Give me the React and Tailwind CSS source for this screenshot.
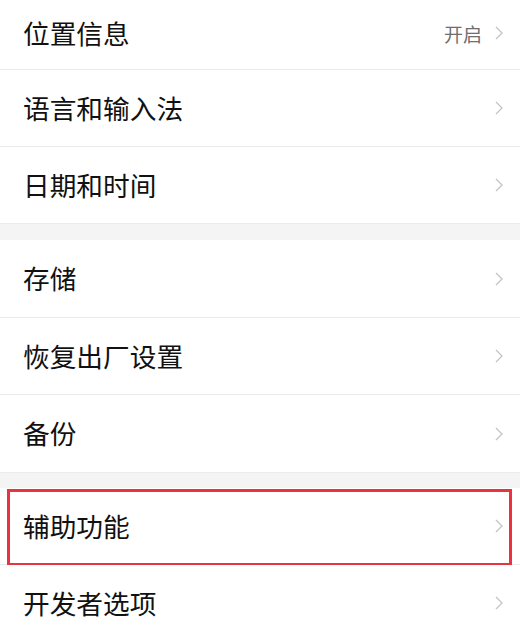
import React from 'react';

const font = { fontFamily: '"Noto Sans CJK SC", "Noto Sans", sans-serif' };

function Chevron() {
  return (
    <svg width="8" height="14" viewBox="0 0 8 14" className="flex-shrink-0">
      <polyline points="1,1 7,7 1,13" fill="none" stroke="#c4c4c4" strokeWidth="1.3" />
    </svg>
  );
}

function Row({ label, value, h = 'h-[77px]', highlight = false, last = false }) {
  return (
    <div className={`relative flex items-center justify-between pl-[23px] pr-[17px] bg-white ${h} ${last ? '' : 'border-b border-[#ececec]'}`}>
      <span className="text-[26.7px] leading-none text-[#111111]">{label}</span>
      <div className="flex items-center gap-[13px]">
        {value && <span className="text-[19px] leading-none text-[#6e6e6e]">{value}</span>}
        <Chevron />
      </div>
      {highlight && (
        <div className="absolute left-[7px] right-[8px] top-[1px] bottom-[-2px] border-[3px] border-[#e8343e] pointer-events-none" />
      )}
    </div>
  );
}

export default function App() {
  return (
    <div className="w-[520px] h-[630px] overflow-hidden bg-white" style={font}>
      <Row label="位置信息" value="开启" h="h-[70px] pb-[3px]" />
      <Row label="语言和输入法" />
      <Row label="日期和时间" />
      <div className="h-[16px] bg-[#f4f4f4]" />
      <Row label="存储" h="h-[78px]" />
      <Row label="恢复出厂设置" />
      <Row label="备份" last />
      <div className="h-[16px] bg-[#f4f4f4] border-t border-[#ececec]" />
      <Row label="辅助功能" highlight />
      <Row label="开发者选项" />
    </div>
  );
}
